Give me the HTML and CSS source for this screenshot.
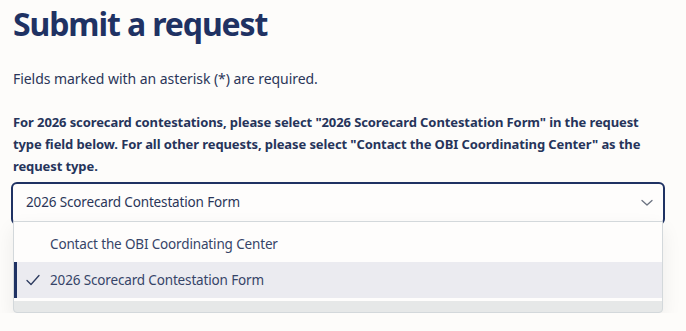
FILE: index.html
```html
<!DOCTYPE html>
<html lang="en">
<head>
<meta charset="utf-8">
<title>Submit a request</title>
<link rel="stylesheet" href="styles.css">
</head>
<body>
<main class="page">
  <h1 class="title">Submit a request</h1>
  <p class="note">Fields marked with an asterisk (*) are required.</p>
  <p class="instructions">For 2026 scorecard contestations, please select "2026 Scorecard Contestation Form" in the request type field below. For all other requests, please select "Contact the OBI Coordinating Center" as the request type.</p>
  <div class="combo">
    <div class="select">
      <span class="select-value">2026 Scorecard Contestation Form</span>
      <svg class="chevron" width="12" height="8" viewBox="0 0 12 8"><path d="M1 1.5 L6 6 L11 1.5" fill="none" stroke="#6b7280" stroke-width="1.3" stroke-linecap="round" stroke-linejoin="round"/></svg>
    </div>
    <div class="menu">
      <ul class="options">
        <li class="option">Contact the OBI Coordinating Center</li>
        <li class="option selected"><svg class="check" width="14" height="12" viewBox="0 0 14 12"><path d="M1 6.5 L5 10.5 L13 1.5" fill="none" stroke="#2c3a5e" stroke-width="1.3" stroke-linecap="round" stroke-linejoin="round"/></svg>2026 Scorecard Contestation Form</li>
      </ul>
      <div class="menu-foot"></div>
    </div>
  </div>
</main>
</body>
</html>
```
FILE: styles.css
```css
html, body {
  margin: 0;
  padding: 0;
  background: #fdfcfa;
}
body {
  font-family: "Noto Sans", "Open Sans", sans-serif;
  color: #2b3659;
}
.page {
  padding: 0 21px 0 11px;
}
.title {
  margin: 0;
  padding: 2px 0 0 2px;
  font-size: 32px;
  line-height: 44px;
  font-weight: 700;
  letter-spacing: -1.1px;
  color: #1f3263;
}
.note {
  margin: 22px 0 0 2px;
  font-size: 14px;
  line-height: 22px;
  letter-spacing: -0.05px;
}
.instructions {
  margin: 21px 0 0 2px;
  font-size: 13px;
  line-height: 22px;
  font-weight: 700;
  letter-spacing: -0.1px;
  color: #26345a;
}
.combo {
  margin-top: 5px;
}
.select {
  box-sizing: border-box;
  height: 43px;
  border: 2px solid #1f3263;
  border-radius: 6px;
  background: #fefdfc;
  display: flex;
  align-items: center;
  justify-content: space-between;
  padding: 0 10px 4px 13px;
  font-size: 13.5px;
  letter-spacing: -0.15px;
  color: #2b3659;
}
.chevron {
  display: block;
  margin-top: 3px;
}
.menu {
  position: relative;
  margin: -4px 2px 0;
  border: 1px solid #d3d8db;
  border-radius: 0 0 4px 4px;
  background: #e6e8e8;
  box-shadow: 0 8px 20px rgba(0, 0, 0, 0.07);
  overflow: hidden;
}
.options {
  list-style: none;
  margin: 0;
  padding: 4px 0 3px;
  background: #fefdfc;
}
.option {
  height: 36px;
  display: flex;
  align-items: center;
  padding-left: 36px;
  font-size: 13.5px;
  letter-spacing: -0.15px;
  color: #364468;
}
.option.selected {
  background: #ebebf0;
  border-left: 3px solid #1f3263;
  padding-left: 9px;
}
.check {
  margin-right: 10px;
}
.menu-foot {
  height: 11px;
}
```
